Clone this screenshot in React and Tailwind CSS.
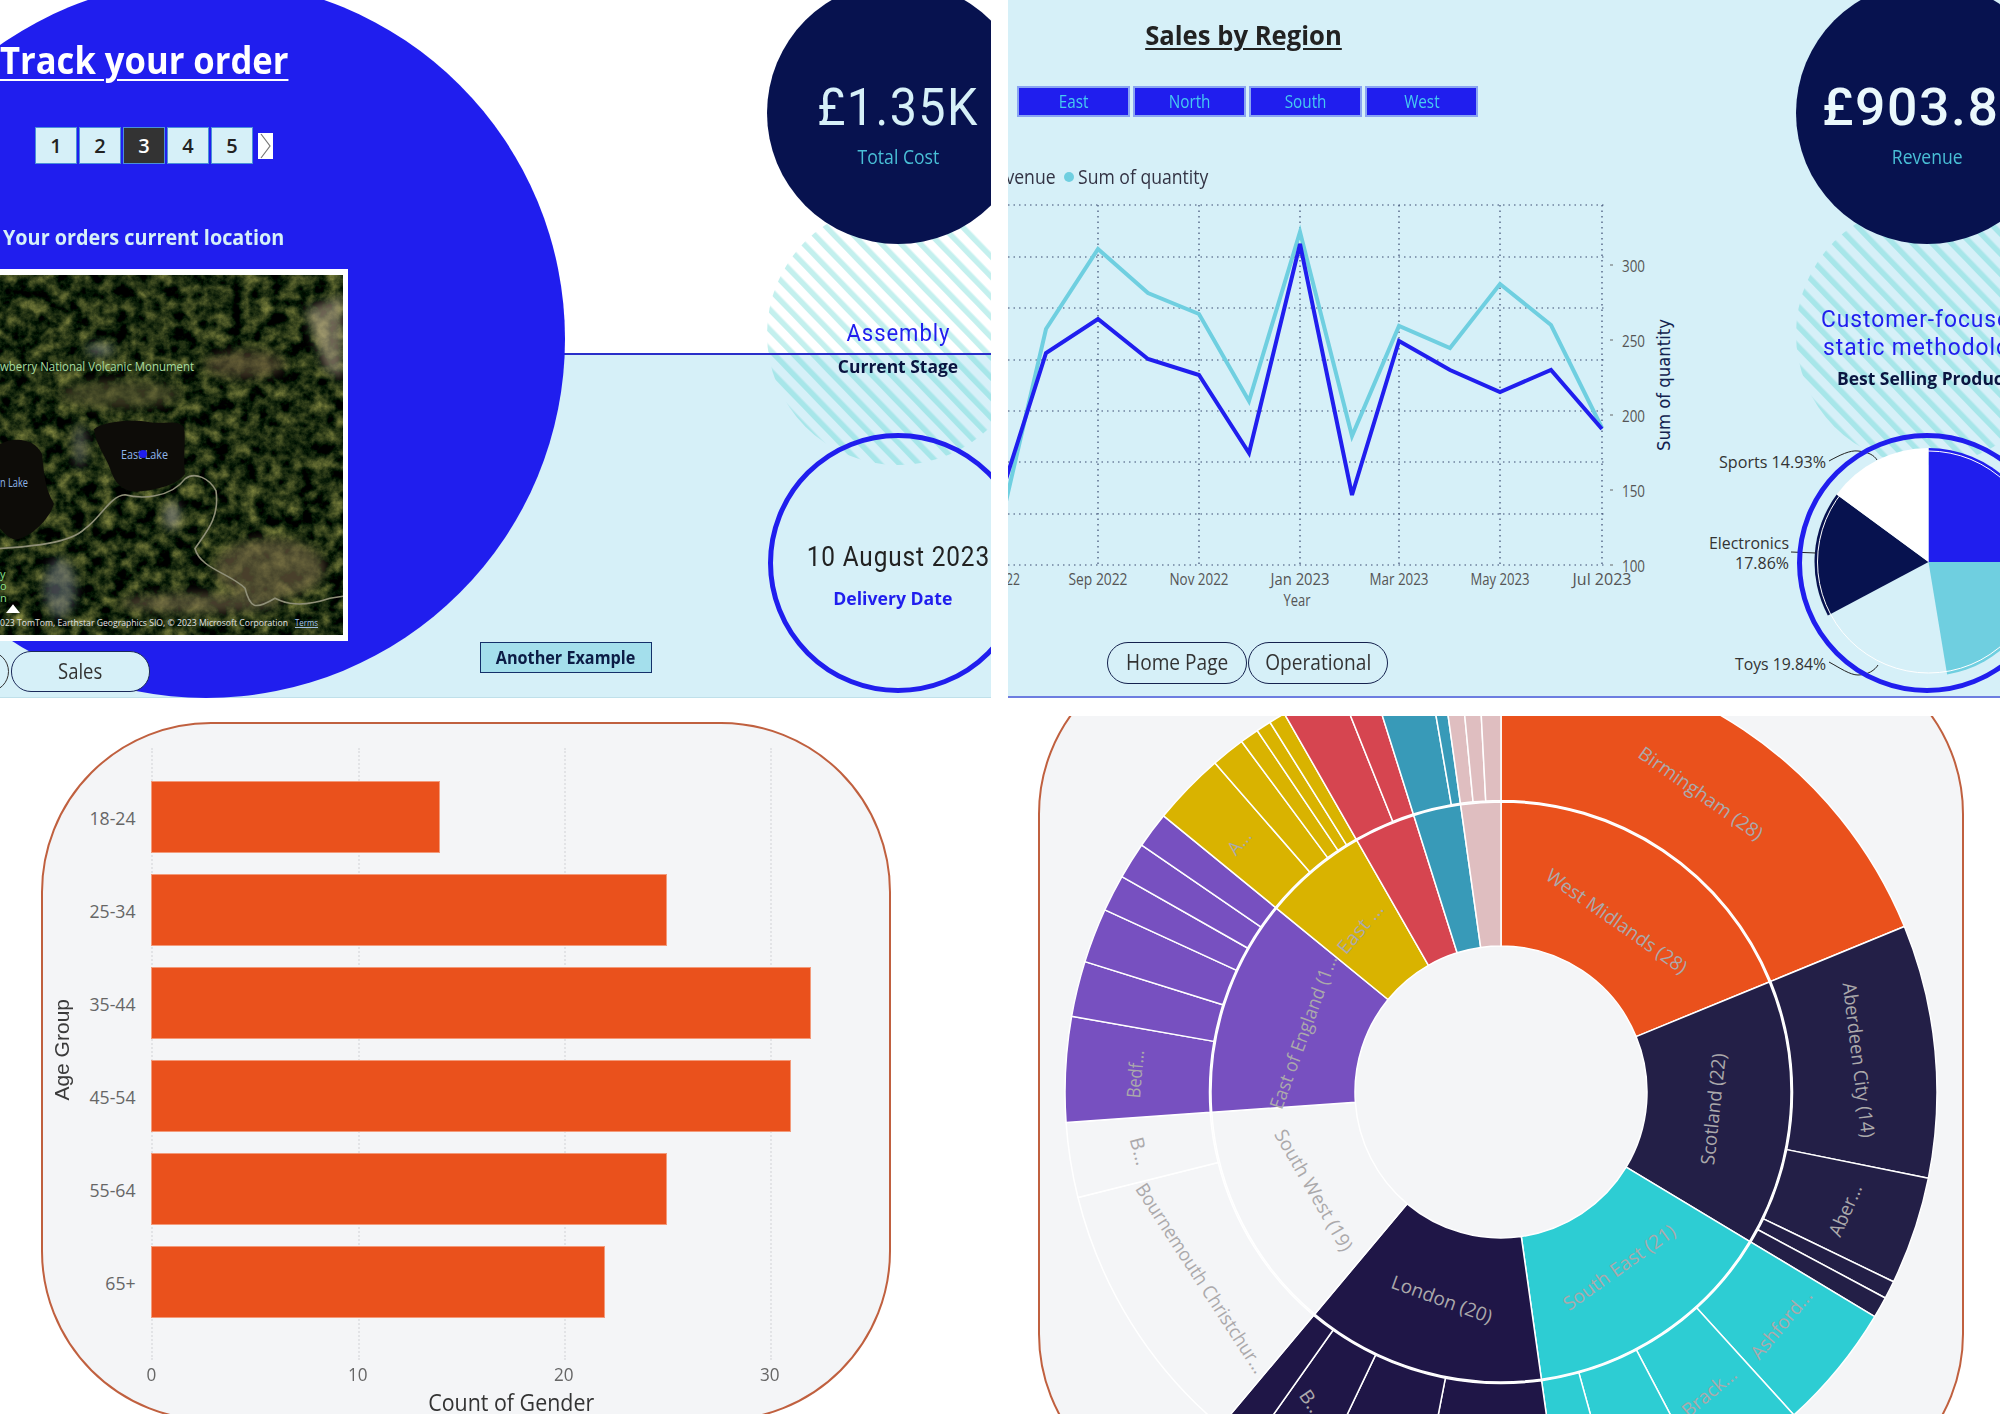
const blue = "#201EEE";
const navy = "#07124F";
const cyan = "#6FCFE0";

const xs = [1000, 1046, 1098, 1148, 1199, 1249, 1300, 1352, 1399, 1450, 1500, 1551, 1602];
const quantity = [527, 329, 249, 293, 314, 401, 232, 436, 326, 348, 284, 325, 428];
const revenue = [498, 353, 319, 359, 375, 453, 244, 495, 341, 370, 392, 370, 429];
const months = [
  ["Sep 2022", 1098],
  ["Nov 2022", 1199],
  ["Jan 2023", 1300],
  ["Mar 2023", 1399],
  ["May 2023", 1500],
  ["Jul 2023", 1602],
];
const axisY = [
  ["300", 265],
  ["250", 340],
  ["200", 415],
  ["150", 490],
  ["100", 565],
];

const ageGroups = [
  ["18-24", 14],
  ["25-34", 25],
  ["35-44", 32],
  ["45-54", 31],
  ["55-64", 25],
  ["65+", 22],
];

const purple = "#7750C0";
const yellow = "#D9B300";
const red = "#D64550";
const teal = "#389AB8";
const pink = "#DFBEC0";
const orange = "#EA511C";
const scot = "#231F47";
const london = "#1F1647";
const sea = "#2DCDD3";
const paper = "#F4F5F7";

const innerRing = [
  [0, 67.7, orange],
  [67.7, 121, scot],
  [121, 172, sea],
  [172, 220, london],
  [220, 266, paper],
  [266, 309.3, purple],
  [309.3, 330.2, yellow],
  [330.2, 342.5, red],
  [342.5, 352, teal],
  [352, 360, pink],
];
const outerRing = [
  [0, 67.7, orange],
  [67.7, 101.4, scot],
  [101.4, 115.8, scot],
  [115.8, 118.2, scot],
  [118.2, 121, scot],
  [121, 137.8, sea],
  [137.8, 152.3, sea],
  [152.3, 164.5, sea],
  [164.5, 172, sea],
  [172, 191, london],
  [191, 205.5, london],
  [205.5, 215.2, london],
  [215.2, 220, london],
  [220, 256, paper],
  [256, 266, paper],
  [266, 280, purple],
  [280, 287.4, purple],
  [287.4, 294.7, purple],
  [294.7, 299.6, purple],
  [299.6, 304.5, purple],
  [304.5, 309.3, purple],
  [309.3, 319, yellow],
  [319, 323.5, yellow],
  [323.5, 326, yellow],
  [326, 328, yellow],
  [328, 330.2, yellow],
  [330.2, 338.2, red],
  [338.2, 342.5, red],
  [342.5, 350.2, teal],
  [350.2, 352, teal],
  [352, 354.5, pink],
  [354.5, 357, pink],
  [357, 360, pink],
];
const sunLabels = [
  ["Birmingham (28)", 1701, 793, 35, 147],
  ["West Midlands (28)", 1617, 921, 35, 167],
  ["Aberdeen City (14)", 1859, 1060, 83, 156],
  ["Scotland (22)", 1713, 1109, -84, 112],
  ["Aber...", 1845, 1210, -66, 55],
  ["South East (21)", 1619, 1267, -35.5, 133],
  ["Ashford...", 1781, 1324, -50, 84],
  ["Brack...", 1709, 1392, -40, 65],
  ["London (20)", 1442, 1299, 20, 106],
  ["B...", 1312, 1403, 55, 28],
  ["South West (19)", 1314, 1190, 60, 137],
  ["Bournemouth Christchur...", 1201, 1278, 57, 222],
  ["B...", 1140, 1151, 75, 28],
  ["Bedf...", 1135, 1074, -85, 48],
  ["East of England (1...", 1303, 1032, -70, 162],
  ["A...", 1239, 842, -50, 26],
  ["East ...", 1360, 928, -50, 60],
];

function polar(cx, cy, r, deg) {
  const a = (deg * Math.PI) / 180;
  return [cx + r * Math.sin(a), cy - r * Math.cos(a)];
}

function ringPath(cx, cy, r0, r1, a0, a1) {
  const large = a1 - a0 > 180 ? 1 : 0;
  const [x0, y0] = polar(cx, cy, r1, a0);
  const [x1, y1] = polar(cx, cy, r1, a1);
  const [x2, y2] = polar(cx, cy, r0, a1);
  const [x3, y3] = polar(cx, cy, r0, a0);
  return `M${x0} ${y0}A${r1} ${r1} 0 ${large} 1 ${x1} ${y1}L${x2} ${y2}A${r0} ${r0} 0 ${large} 0 ${x3} ${y3}Z`;
}

function pieSlice(cx, cy, r, a0, a1) {
  const [x0, y0] = polar(cx, cy, r, a0);
  const [x1, y1] = polar(cx, cy, r, a1);
  return `M${cx} ${cy}L${x0} ${y0}A${r} ${r} 0 ${a1 - a0 > 180 ? 1 : 0} 1 ${x1} ${y1}Z`;
}

function toPoints(ys) {
  return ys.map((y, i) => `${xs[i]},${y}`).join(" ");
}

function Stripes({ id, cx, originX }) {
  return (
    <svg className="absolute top-0 left-0 h-[698px] w-[992px]" viewBox={`${originX} 0 992 698`}>
      <defs>
        <pattern id={id} width="14" height="14" patternUnits="userSpaceOnUse" patternTransform="rotate(-44)">
          <rect width="5.5" height="14" fill="#3CD0C8" fillOpacity="0.3" />
        </pattern>
      </defs>
      <circle cx={cx} cy="334" r="131" fill={`url(#${id})`} />
    </svg>
  );
}

function SatelliteMap() {
  return (
    <svg className="block h-full w-full" viewBox="0 275 343 362" preserveAspectRatio="none">
      <defs>
        <filter id="sat" x="0" y="0" width="100%" height="100%" colorInterpolationFilters="sRGB">
          <feTurbulence type="fractalNoise" baseFrequency="0.07" numOctaves="5" seed="11" />
          <feColorMatrix values="0.95 0 0 0 -0.36  0.85 0 0 0 -0.25  0.45 0 0 0 -0.16  0 0 0 0 1" />
        </filter>
        <filter id="soft">
          <feGaussianBlur stdDeviation="5" />
        </filter>
      </defs>
      <rect x="0" y="275" width="343" height="362" fill="#26351a" filter="url(#sat)" />
      <g filter="url(#soft)" opacity="0.6">
        <path d="M305 310L343 295L343 380L325 370Z" fill="#b8a88c" />
        <ellipse cx="270" cy="570" rx="55" ry="30" fill="#7a6a48" />
        <ellipse cx="120" cy="395" rx="60" ry="14" fill="#5d5a34" />
        <ellipse cx="245" cy="365" rx="40" ry="14" fill="#66553a" />
        <ellipse cx="200" cy="605" rx="80" ry="10" fill="#786a4c" />
        <ellipse cx="60" cy="590" rx="16" ry="30" fill="#6a7078" />
        <ellipse cx="80" cy="447" rx="7" ry="22" fill="#6e6e68" />
        <ellipse cx="172" cy="517" rx="8" ry="14" fill="#b0aba0" />
        <ellipse cx="100" cy="350" rx="14" ry="6" fill="#9fa39a" />
      </g>
      <path d="M94 430C105 422 130 420 150 423C165 425 178 420 184 428C186 440 183 460 185 475C178 485 160 490 145 492C130 495 118 490 112 475C108 460 95 445 94 430Z" fill="#0d0c08" />
      <path d="M0 445C15 437 35 440 42 455C44 475 45 490 54 505C50 520 30 540 15 541C8 540 3 533 0 530Z" fill="#0d0c08" />
      <path d="M0 550C30 548 70 545 85 530C100 520 110 497 125 496C140 500 170 500 185 480C195 472 210 480 216 492C220 520 205 535 195 550C200 570 230 575 245 590C250 610 255 612 275 600C285 605 300 610 330 600L343 598" fill="none" stroke="#8f8f78" strokeWidth="1.6" />
      <text x="0" y="372" fontSize="12.5" fill="#a8dca0" textLength="194" lengthAdjust="spacingAndGlyphs">wberry National Volcanic Monument</text>
      <text x="121" y="460" fontSize="12" fill="#8fb5e8" textLength="47" lengthAdjust="spacingAndGlyphs">East Lake</text>
      <circle cx="143" cy="455" r="4" fill={blue} />
      <text x="0" y="488" fontSize="12" fill="#8fb5e8" textLength="28" lengthAdjust="spacingAndGlyphs">n Lake</text>
      <text x="0" y="580" fontSize="11" fill="#8fe08f">y</text>
      <text x="0" y="592" fontSize="11" fill="#8fe08f">o</text>
      <text x="0" y="604" fontSize="11" fill="#8fe08f">n</text>
      <path d="M6 615L13 606L20 615Z" fill="#fff" />
      <text x="0" y="628" fontSize="9.5" fill="#e4e4e4" textLength="288" lengthAdjust="spacingAndGlyphs">023 TomTom, Earthstar Geographics SIO, © 2023 Microsoft Corporation</text>
      <text x="295" y="628" fontSize="9.5" fill="#a8c8f0" textDecoration="underline" textLength="23" lengthAdjust="spacingAndGlyphs">Terms</text>
    </svg>
  );
}

function TrackOrder() {
  return (
    <section className="relative h-[698px] overflow-hidden bg-white">
      <div className="h-[353px]" />
      <div className="h-[345px] border-b border-b-[#BFE0EA] bg-[#D6F0F8]" />
      <Stripes id="stripeA" cx={898} originX={0} />
      <div className="absolute top-[353px] left-0 h-[2px] w-full bg-[#2A2FC9]" />
      <div className="absolute top-[-20px] left-[-153px] size-[718px] rounded-full bg-[#201EEE]" />

      <div className="absolute top-0 left-0 flex w-[565px] flex-col items-start text-white">
        <h1 className="mt-[36px] h-[46px] origin-left scale-x-[0.91] text-[38px] leading-[46px] font-bold whitespace-nowrap underline decoration-2 underline-offset-[5px]">
          Track your order
        </h1>
        <div className="mt-[45px] ml-[35px] flex h-[37px] items-center gap-[2px] text-[20px] font-semibold text-[#222]">
          {[1, 2, 3, 4, 5].map((n) => (
            <div
              key={n}
              className={
                n === 3
                  ? "flex h-[37px] w-[42px] items-center justify-center border border-[#4A90D8] bg-[#333] text-white"
                  : "flex h-[37px] w-[42px] items-center justify-center border border-[#4A90D8] bg-[#D6F0F8]"
              }
            >
              {n}
            </div>
          ))}
          <svg className="ml-[3px]" width="15" height="26" viewBox="0 0 15 26">
            <rect width="15" height="26" fill="#fff" />
            <path d="M3 1L12 13L3 25" fill="none" stroke="#777" strokeWidth="1.2" />
          </svg>
        </div>
        <h2 className="mt-[58px] ml-[3px] h-[28px] origin-left scale-x-[0.9] text-[22px] leading-[28px] font-bold whitespace-nowrap text-[#D6F0F8]">
          Your orders current location
        </h2>
        <div className="mt-[19px] h-[372px] w-[348px] border-y-[6px] border-r-[5px] border-white">
          <SatelliteMap />
        </div>
        <div className="mt-[10px] flex h-[41px] items-center gap-[2px] text-[21px] text-[#333]">
          <div className="-ml-[40px] h-[41px] w-[49px] rounded-full border border-[#333] bg-[#D6F0F8]" />
          <button className="h-[41px] w-[139px] rounded-[20px] border border-[#1B2A5A] bg-[#D6F0F8]">
            <span className="inline-block scale-x-[0.88]">Sales</span>
          </button>
        </div>
      </div>

      <button className="absolute top-[642px] left-[480px] h-[31px] w-[172px] border border-[#14306A] bg-[#A4DFEC] text-[18px] font-bold text-[#0C1C46]">
        <span className="inline-block scale-x-[0.9] whitespace-nowrap">Another Example</span>
      </button>

      <div className="absolute top-[-18px] left-[767px] flex size-[262px] flex-col items-center rounded-full bg-[#07124F] pt-[97px]">
        <div className="h-[58px] scale-x-[0.95] font-['Roboto',sans-serif] text-[51px] leading-[58px] tracking-[1.5px] text-[#D6F0F8]">£1.35K</div>
        <div className="mt-[7px] h-[26px] scale-x-[0.88] text-[20px] leading-[26px] text-[#49BFD6]">Total Cost</div>
      </div>

      <div className="absolute top-[316px] left-[767px] flex w-[262px] flex-col items-center">
        <div className="h-[34px] scale-x-[0.92] font-['Roboto',sans-serif] text-[24px] leading-[34px] tracking-[1px] text-[#201EEE]">Assembly</div>
        <div className="mt-[4px] h-[24px] scale-x-[0.97] text-[18px] leading-[24px] font-bold text-[#0A1440]">Current Stage</div>
      </div>

      <div className="absolute top-[433px] left-[768px] flex size-[260px] flex-col items-center rounded-full border-[5px] border-[#201EEE] pt-[101px]">
        <div className="h-[36px] scale-x-[0.87] font-['Roboto',sans-serif] text-[28px] leading-[36px] tracking-[1px] whitespace-nowrap text-[#222]">10 August 2023</div>
        <div className="mt-[11px] -ml-[10px] h-[24px] scale-x-[0.98] text-[18px] leading-[24px] font-bold whitespace-nowrap text-[#201EEE]">Delivery Date</div>
      </div>
    </section>
  );
}

function Label({ x, y, w, size = 15.5, fill = "#555", anchor = "middle", children }) {
  return (
    <text
      x={x}
      y={y}
      fontSize={size}
      fill={fill}
      textAnchor={anchor}
      dominantBaseline="central"
      textLength={w}
      lengthAdjust="spacingAndGlyphs"
    >
      {children}
    </text>
  );
}

function LineChart() {
  return (
    <svg className="absolute top-0 left-0 h-[698px] w-[992px]" viewBox="1008 0 992 698">
      {[205, 257, 308, 360, 411, 462, 514, 565].map((y) => (
        <line key={y} x1="1008" x2="1607" y1={y} y2={y} stroke="#3A4A70" strokeWidth="1.2" strokeDasharray="1.5 4" />
      ))}
      {months.map(([m, x]) => (
        <line key={m} x1={x} x2={x} y1="205" y2="565" stroke="#3A4A70" strokeWidth="1.2" strokeDasharray="1.5 4" />
      ))}
      {axisY.map(([t, y]) => (
        <g key={t}>
          <line x1="1610" x2="1613" y1={y} y2={y} stroke="#666" />
          <Label x={1622} y={y + 1} w={23} anchor="start">{t}</Label>
        </g>
      ))}
      {months.map(([m, x]) => (
        <Label key={m} x={x} y={579} w={59}>{m}</Label>
      ))}
      <Label x={1020} y={579} w={14} anchor="end">22</Label>
      <Label x={1297} y={600} w={27}>Year</Label>
      <text
        transform="translate(1664 385) rotate(-90)"
        fontSize="17"
        fill="#12224F"
        textAnchor="middle"
        dominantBaseline="central"
        fontFamily="'DejaVu Sans', sans-serif"
        textLength="132"
        lengthAdjust="spacingAndGlyphs"
      >
        Sum of quantity
      </text>
      <polyline points={toPoints(quantity)} fill="none" stroke={cyan} strokeWidth="4" />
      <polyline points={toPoints(revenue)} fill="none" stroke={blue} strokeWidth="4" />
    </svg>
  );
}

function PieChart() {
  const cx = 1928.5;
  const cy = 562;
  return (
    <svg className="absolute top-0 left-0 h-[698px] w-[992px]" viewBox="1008 0 992 698">
      <path d={pieSlice(cx, cy, 114, 0, 90)} fill={blue} />
      <path d={pieSlice(cx, cy, 114, 90, 170.6)} fill={cyan} />
      <path d={pieSlice(cx, cy, 114, 242, 306.3)} fill={navy} />
      <path d={pieSlice(cx, cy, 114, 306.3, 360)} fill="#fff" />
      <circle cx={cx} cy={cy} r="111" fill="none" stroke="#fff" strokeWidth="1" />
      <path d="M1829 461C1840 455 1850 450 1858 451C1868 452 1874 455 1877 460" fill="none" stroke="#222" strokeWidth="1" />
      <path d="M1791 552L1816 553" fill="none" stroke="#222" strokeWidth="1" />
      <path d="M1829 662C1840 668 1850 675 1858 675C1868 675 1875 670 1878 665" fill="none" stroke="#222" strokeWidth="1" />
      <Label x={1826} y={461} w={107} size={17} fill="#333" anchor="end">Sports 14.93%</Label>
      <Label x={1789} y={542} w={80} size={17} fill="#333" anchor="end">Electronics</Label>
      <Label x={1789} y={562} w={54} size={17} fill="#333" anchor="end">17.86%</Label>
      <Label x={1826} y={663} w={91} size={17} fill="#333" anchor="end">Toys 19.84%</Label>
    </svg>
  );
}

function SalesByRegion() {
  return (
    <section className="relative h-[698px] overflow-hidden border-b-2 border-[#6D7DE0] bg-[#D6F0F8]">
      <Stripes id="stripeB" cx={1927} originX={1008} />
      <LineChart />

      <div className="relative flex flex-col items-start">
        <h2 className="mt-[17px] h-[36px] w-[470px] text-center text-[27px] leading-[36px] font-bold text-[#222]">
          <span className="inline-block scale-x-[0.95] whitespace-nowrap underline decoration-2 underline-offset-[3px]">Sales by Region</span>
        </h2>
        <div className="mt-[33px] ml-[9px] flex gap-[3px]">
          {["East", "North", "South", "West"].map((r) => (
            <div key={r} className="flex h-[31px] w-[113px] items-center justify-center border-2 border-[#8AA4F2] bg-[#201EEE] text-[18px] text-[#46CBF0]">
              <span className="scale-x-[0.85]">{r}</span>
            </div>
          ))}
        </div>
        <div className="mt-[47px] flex h-[26px] items-center text-[20px] leading-[26px] text-[#334]">
          <div className="flex w-[48px] justify-end overflow-hidden">
            <span className="origin-right scale-x-[0.88] whitespace-nowrap">Revenue</span>
          </div>
          <span className="ml-[8px] size-[10px] rounded-full bg-[#6FCFE0]" />
          <span className="ml-[4px] origin-left scale-x-[0.88] whitespace-nowrap">Sum of quantity</span>
        </div>
        <div className="mt-[452px] ml-[99px] flex gap-[1px] text-[21px] text-[#333]">
          {["Home Page", "Operational"].map((b) => (
            <button key={b} className="h-[42px] w-[140px] rounded-[21px] border-[1.5px] border-[#14224E]">
              <span className="inline-block scale-x-[0.91] whitespace-nowrap">{b}</span>
            </button>
          ))}
        </div>
      </div>

      <div className="absolute top-[-18px] left-[788px] flex size-[262px] flex-col items-center rounded-full bg-[#07124F] pt-[97px]">
        <div className="h-[58px] scale-x-[1.05] font-['Roboto',sans-serif] text-[51px] leading-[58px] font-medium tracking-[1.5px] whitespace-nowrap text-[#EAF8FC]">£903.83</div>
        <div className="mt-[7px] h-[26px] scale-x-[0.88] text-[20px] leading-[26px] text-[#49BFD6]">Revenue</div>
      </div>

      <div className="absolute top-[305px] left-[813px] flex w-[300px] flex-col items-start whitespace-nowrap">
        <div className="h-[28px] origin-left scale-x-[0.95] font-['Roboto',sans-serif] text-[24px] leading-[28px] tracking-[1px] text-[#201EEE]">Customer-focused</div>
        <div className="ml-[2px] h-[28px] origin-left scale-x-[0.95] font-['Roboto',sans-serif] text-[24px] leading-[28px] tracking-[1px] text-[#201EEE]">static methodology</div>
        <div className="mt-[5px] ml-[16px] h-[24px] origin-left scale-x-[0.97] text-[18px] leading-[24px] font-bold text-[#0A1440]">Best Selling Product</div>
      </div>

      <PieChart />
      <div className="absolute top-[433px] left-[789px] size-[260px] rounded-full border-[5px] border-[#201EEE]" />
    </section>
  );
}

function AgeChart() {
  return (
    <section className="h-[716px] overflow-hidden pt-[24px] pl-[41px]">
      <div className="relative h-[699px] w-[850px] rounded-[170px] border-2 border-[#C0603F] bg-[#F4F5F7]">
        {[108, 315, 521, 727].map((left) => (
          <div key={left} style={{ left }} className="absolute top-[24px] h-[612px] w-0 border-l-2 border-dotted border-[#E2E3E6]" />
        ))}
        <div className="relative pt-[57px]">
          <div className="flex">
            <div className="ml-[8px] flex w-[22px] items-center justify-center">
              <span className="rotate-180 font-['Liberation_Sans',sans-serif] text-[21px] whitespace-nowrap text-[#3A3A3A] [writing-mode:vertical-rl]">Age Group</span>
            </div>
            <div className="flex flex-col gap-[21.1px]">
              {ageGroups.map(([label, count]) => (
                <div key={label} className="flex h-[72px] items-center">
                  <div className="w-[78px] pr-[15px] text-right text-[19px] text-[#666]">
                    <span className="inline-block origin-right translate-y-[1px] scale-x-[0.93]">{label}</span>
                  </div>
                  <div className="h-full border border-[#F39A7A] bg-[#EA511C]" style={{ width: count * 20.63 }} />
                </div>
              ))}
            </div>
          </div>
          <div className="mt-[44px] ml-[5px] flex text-center text-[19px] leading-[24px] text-[#666]">
            {[0, 10, 20, 30].map((t) => (
              <div key={t} className="w-[206.3px]">
                <span className="inline-block scale-x-[0.9]">{t}</span>
              </div>
            ))}
          </div>
          <div className="mt-[3px] w-[936px] text-center text-[23px] leading-[27px] text-[#333]">
            <span className="inline-block scale-x-[0.93] whitespace-nowrap">Count of Gender</span>
          </div>
        </div>
      </div>
    </section>
  );
}

function Sunburst() {
  const cx = 1501;
  const cy = 1092;
  return (
    <svg className="absolute inset-0 h-full w-full" viewBox="1008 716 992 698">
      {innerRing.map(([a0, a1, c]) => (
        <path key={a0} d={ringPath(cx, cy, 146, 290, a0, a1)} fill={c} stroke="#fff" strokeWidth="1.5" strokeLinejoin="round" />
      ))}
      {outerRing.map(([a0, a1, c]) => (
        <path key={a0} d={ringPath(cx, cy, 291.5, 436, a0, a1)} fill={c} stroke="#fff" strokeWidth="1.5" strokeLinejoin="round" />
      ))}
      {sunLabels.map(([t, x, y, rot, w]) => (
        <text
          key={t + x}
          transform={`translate(${x} ${y}) rotate(${rot})`}
          fontSize="19"
          fontWeight="500"
          fill="#ABA9AB"
          textAnchor="middle"
          dominantBaseline="central"
          textLength={w}
          lengthAdjust="spacingAndGlyphs"
        >
          {t}
        </text>
      ))}
    </svg>
  );
}

function RegionSunburst() {
  return (
    <section className="relative h-[698px] overflow-hidden">
      <div className="-mt-[72px] ml-[30px] h-[860px] w-[926px] rounded-[170px] border-2 border-[#C0603F] bg-[#F4F5F7]" />
      <Sunburst />
    </section>
  );
}

export default function App() {
  return (
    <div className="h-[1414px] w-[2000px] overflow-hidden bg-white font-['Open_Sans',sans-serif]">
      <div className="grid grid-cols-[991px_992px] gap-x-[17px]">
        <TrackOrder />
        <SalesByRegion />
        <AgeChart />
        <div className="pt-[18px]">
          <RegionSunburst />
        </div>
      </div>
    </div>
  );
}
